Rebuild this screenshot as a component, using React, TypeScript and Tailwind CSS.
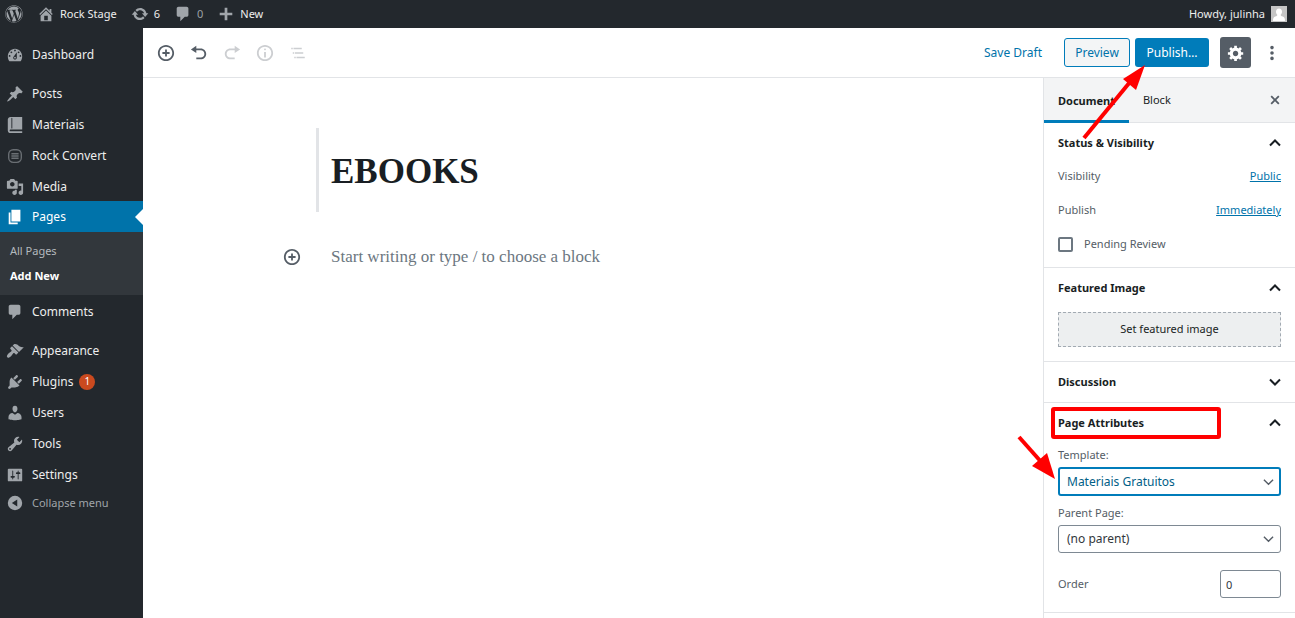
import { useState } from 'react';
import type { ReactNode } from 'react';
import { FaWordpress } from 'react-icons/fa';
import { clsx } from 'clsx';

const icons = {
  home: 'M16 8.5l1.53 1.53-1.06 1.06L10 4.6l-6.47 6.49-1.06-1.06L10 2.5l4 4v-2h2v4zm-6-2.46l6 5.99V18H4v-5.97zM12 17v-5H8v5h4z',
  update: 'M10.2 3.28c3.53 0 6.43 2.61 6.92 6h2.08l-3.5 4-3.5-4h2.32c-.45-1.97-2.21-3.45-4.32-3.45-1.45 0-2.73.71-3.54 1.78L4.95 5.66C6.23 4.2 8.11 3.28 10.2 3.28zm-.4 13.44c-3.52 0-6.43-2.61-6.92-6H.8l3.5-4c1.17 1.33 2.33 2.67 3.5 4H5.48c.45 1.97 2.21 3.45 4.32 3.45 1.45 0 2.73-.71 3.54-1.78l1.71 1.95c-1.28 1.46-3.15 2.38-5.25 2.38z',
  comments: 'M5 2h9c1.1 0 2 .9 2 2v7c0 1.1-.9 2-2 2h-2l-5 5v-5H5c-1.1 0-2-.9-2-2V4c0-1.1.9-2 2-2z',
  plus: 'M17 8.500v3h-5.5V17h-3v-5.500H3v-3h5.500V3h3v5.500z',
  dashboard: 'M3.76 17h12.48c1.1-1.37 1.76-3.61 1.76-5.500 0-4.420-3.580-8.500-8-8.500s-8 4.080-8 8.500c0 1.890.66 4.130 1.760 5.500zM10 4c.55 0 1 .45 1 1s-.45 1-1 1-1-.45-1-1 .45-1 1-1zM6 6c.55 0 1 .45 1 1s-.45 1-1 1-1-.45-1-1 .45-1 1-1zm8 0c.55 0 1 .45 1 1s-.45 1-1 1-1-.45-1-1 .45-1 1-1zm-5.370 5.550L12 7v6c0 1.100-.9 2-2 2s-2-.9-2-2c0-.57.24-1.080.63-1.450zM4 10c.55 0 1 .45 1 1s-.45 1-1 1-1-.45-1-1 .45-1 1-1zm12 0c.55 0 1 .45 1 1s-.45 1-1 1-1-.45-1-1 .45-1 1-1zm-5 3c0-.55-.45-1-1-1s-1 .45-1 1 .45 1 1 1 1-.45 1-1z',
  post: 'M10.44 3.02l1.82-1.82 6.36 6.35-1.83 1.82c-1.05-.68-2.48-.57-3.41.36l-.75.75c-.92.93-1.04 2.35-.35 3.41l-1.83 1.82-2.41-2.41-2.8 2.79c-.42.42-3.38 2.71-3.8 2.29s1.86-3.39 2.28-3.81l2.79-2.79L4.1 9.36l1.83-1.82c1.05.69 2.48.57 3.4-.36l.75-.75c.93-.92 1.05-2.35.36-3.41z',
  book: 'M5 17h13v2H5c-1.66 0-3-1.34-3-3V4c0-1.66 1.34-3 3-3h13v14H5c-.55 0-1 .45-1 1s.45 1 1 1zm2-3.5v-11c0-.28-.22-.5-.5-.5s-.5.22-.5.5v11c0 .28.22.5.5.5s.5-.22.5-.5z',
  media: 'M13 11V4c0-.55-.45-1-1-1h-1.67L9 1H5L3.67 3H2c-.55 0-1 .45-1 1v7c0 .55.45 1 1 1h10c.55 0 1-.45 1-1zM7 4.5c1.38 0 2.5 1.12 2.5 2.5S8.38 9.5 7 9.5 4.5 8.38 4.5 7 5.62 4.5 7 4.5zM14 6h5v10.5c0 1.38-1.12 2.5-2.5 2.5S14 17.88 14 16.5s1.12-2.5 2.5-2.5c.17 0 .34.02.5.05V9h-3V6zm-4 8.05V13h2v3.5c0 1.38-1.12 2.5-2.5 2.5S7 17.88 7 16.5 8.12 14 9.5 14c.17 0 .34.02.5.05z',
  page: 'M6 15V2h10v13H6zm-1 1h8v2H3V5h2v11z',
  appearance: 'M14.48 11.06L7.41 3.99l1.5-1.5c.5-.56 2.3-.47 3.51.32 1.21.8 1.43 1.28 2.91 2.1 1.18.64 2.45 1.26 4.45.85zm-.71.71L6.7 4.7 4.93 6.47c-.39.39-.39 1.02 0 1.41l1.06 1.06c.39.39.39 1.03 0 1.42-.6.6-1.43 1.11-2.21 1.69-.35.26-.7.53-1.01.84C1.43 14.23.4 16.08 1.4 17.07c.99 1 2.84-.03 4.18-1.36.31-.31.58-.66.85-1.02.57-.78 1.08-1.61 1.69-2.21.39-.39 1.02-.39 1.41 0l1.06 1.06c.39.39 1.02.39 1.41 0z',
  plugins: 'M13.11 4.36L9.87 7.6 8 5.73l3.24-3.24c.35-.34 1.05-.2 1.56.32.52.51.66 1.21.31 1.55zm-8 1.77l.91-1.12 9.01 9.01-1.19.84c-.71.71-2.63 1.16-3.82 1.16H6.14L4.9 17.26c-.59.59-1.54.59-2.12 0-.59-.58-.59-1.53 0-2.12l1.24-1.24v-3.88c0-1.13.4-3.19 1.09-3.89zm7.26 3.97l3.24-3.24c.34-.35 1.04-.21 1.55.31.52.51.66 1.21.31 1.55l-3.24 3.25z',
  users: 'M10 9.25c-2.27 0-2.73-3.44-2.73-3.44C7 4.02 7.82 2 9.97 2c2.16 0 2.98 2.02 2.71 3.81 0 0-.41 3.44-2.68 3.44zm0 2.57L12.72 10c2.39 0 4.52 2.33 4.52 4.53v2.49s-3.65 1.13-7.24 1.13c-3.65 0-7.24-1.13-7.24-1.13v-2.49c0-2.25 1.94-4.48 4.47-4.48z',
  tools: 'M16.68 9.77c-1.34 1.34-3.3 1.67-4.95.99l-5.41 6.52c-.99.99-2.59.99-3.58 0s-.99-2.59 0-3.57l6.52-5.42c-.68-1.65-.35-3.61.99-4.95 1.28-1.28 3.12-1.62 4.72-1.06l-2.89 2.89 2.82 2.82 2.86-2.87c.53 1.58.18 3.39-1.08 4.65zM3.81 16.21c.4.39 1.04.39 1.43 0 .4-.4.4-1.04 0-1.43-.39-.4-1.03-.4-1.43 0-.39.39-.39 1.03 0 1.43z',
  settings: 'M18 16V4c0-.55-.45-1-1-1H3c-.55 0-1 .45-1 1v12c0 .55.45 1 1 1h14c.55 0 1-.45 1-1zM8 11h1c.55 0 1 .45 1 1s-.45 1-1 1H8v1.5c0 .28-.22.5-.5.5s-.5-.22-.5-.5V13H6c-.55 0-1-.45-1-1s.45-1 1-1h1V5.5c0-.28.22-.5.5-.5s.5.22.5.5V11zm5-2h-1c-.55 0-1-.45-1-1s.45-1 1-1h1V5.5c0-.28.22-.5.5-.5s.5.22.5.5V7h1c.55 0 1 .45 1 1s-.45 1-1 1h-1v5.5c0 .28-.22.5-.5.5s-.5-.22-.5-.5V9z',
  collapse: 'M10 2a8 8 0 1 0 0 16 8 8 0 0 0 0-16zm2.500 4v8L6.500 10z',
  insert: 'M10 1c-5 0-9 4-9 9s4 9 9 9 9-4 9-9-4-9-9-9zm0 16c-3.9 0-7-3.1-7-7s3.1-7 7-7 7 3.1 7 7-3.1 7-7 7zm1-11H9v3H6v2h3v3h2v-3h3V9h-3V6z',
  undo: 'M12 5H7V2L1 6l6 4V7h5c2.2 0 4 1.8 4 4s-1.8 4-4 4H7v2h5c3.3 0 6-2.7 6-6s-2.7-6-6-6z',
  redo: 'M8 5h5V2l6 4-6 4V7H8c-2.2 0-4 1.8-4 4s1.8 4 4 4h5v2H8c-3.3 0-6-2.7-6-6s2.7-6 6-6z',
  info: 'M9 15h2V9H9v6zm1-10c-.5 0-1 .5-1 1s.5 1 1 1 1-.5 1-1-.5-1-1-1zm0-4c-5 0-9 4-9 9s4 9 9 9 9-4 9-9-4-9-9-9zm0 16c-3.9 0-7-3.1-7-7s3.1-7 7-7 7 3.1 7 7-3.1 7-7 7z',
  outline: 'M5 5H3v2h2V5zm3 8h11v-2H8v2zm9-8H6v2h11V5zM7 11H5v2h2v-2zm0 8h2v-2H7v2zm3-2v2h11v-2H10z',
  gear: 'M18 12h-2.18c-.17.7-.44 1.35-.81 1.93l1.54 1.54-2.1 2.1-1.54-1.54c-.58.36-1.23.63-1.91.79V19H8v-2.18c-.68-.16-1.33-.43-1.91-.79l-1.54 1.54-2.12-2.12 1.54-1.54c-.36-.58-.63-1.23-.79-1.91H1V9.03h2.17c.16-.7.44-1.35.8-1.94L2.43 5.55l2.1-2.1 1.54 1.54c.58-.37 1.24-.64 1.93-.81V2h3v2.18c.68.16 1.33.43 1.91.79l1.54-1.54 2.12 2.12-1.54 1.54c.36.59.64 1.24.8 1.94H18V12zm-8.5 1.5c1.66 0 3-1.34 3-3s-1.34-3-3-3-3 1.34-3 3 1.34 3 3 3z',
  close: 'M14.95 6.46L11.41 10l3.54 3.54-1.41 1.41L10 11.42l-3.53 3.53-1.42-1.42L8.58 10 5.05 6.47l1.42-1.42L10 8.58l3.54-3.53z',
  more: 'M10 2a2 2 0 1 1 0 4 2 2 0 0 1 0-4zm0 6a2 2 0 1 1 0 4 2 2 0 0 1 0-4zm0 6a2 2 0 1 1 0 4 2 2 0 0 1 0-4z',
};

type IconName = keyof typeof icons;

function Icon({ name, className = 'size-[18px]' }: { name: IconName; className?: string }) {
  return (
    <svg viewBox={name === 'outline' ? '0 0 24 24' : '0 0 20 20'} fill="currentColor" fillRule="evenodd" aria-hidden="true" className={clsx('shrink-0', className)}>
      <path d={icons[name]} />
    </svg>
  );
}

function RockConvertIcon() {
  return (
    <svg viewBox="0 0 20 20" fill="none" stroke="currentColor" strokeWidth="1.5" aria-hidden="true" className="size-[18px] shrink-0 text-[#6a6f74]">
      <rect x="3" y="3" width="14" height="14" rx="5" />
      <path d="M6 7.500h8M6 10h8M6 12.500h8" />
    </svg>
  );
}

function Chevron({ open, className, weight = 2 }: { open: boolean; className?: string; weight?: number }) {
  return (
    <svg viewBox="0 0 12 8" fill="none" stroke="currentColor" strokeWidth={weight} aria-hidden="true" className={clsx('shrink-0', className ?? 'h-2 w-3')}>
      <path d={open ? 'M1 6.500 6 1.500l5 5' : 'M1 1.500l5 5 5-5'} />
    </svg>
  );
}

interface MenuItem {
  label: string;
  icon?: IconName;
  badge?: number;
}

const contentMenu: MenuItem[] = [
  { label: 'Posts', icon: 'post' },
  { label: 'Materiais', icon: 'book' },
  { label: 'Rock Convert' },
  { label: 'Media', icon: 'media' },
];

const adminMenu: MenuItem[] = [
  { label: 'Appearance', icon: 'appearance' },
  { label: 'Plugins', icon: 'plugins', badge: 1 },
  { label: 'Users', icon: 'users' },
  { label: 'Tools', icon: 'tools' },
  { label: 'Settings', icon: 'settings' },
];

function MenuLink({ item }: { item: MenuItem }) {
  return (
    <a href="#" className="flex h-[31px] items-center gap-2 pt-0.5 pl-[6px] text-[#eee]">
      <span className="text-[#a0a5aa]">{item.icon ? <Icon name={item.icon} /> : <RockConvertIcon />}</span>
      {item.label}
      {item.badge && <span className="-ml-0.5 flex size-4 items-center justify-center rounded-full bg-[#ca4a1f] text-[10px] text-white">{item.badge}</span>}
    </a>
  );
}

function AdminBar() {
  return (
    <header className="flex h-7 shrink-0 items-center bg-[#23282d] pr-2 pl-[5px] text-[11px] text-[#eee]">
      <a href="#" aria-label="WordPress" className="mr-[14px] text-[#a0a5aa]"><FaWordpress className="size-[18px]" /></a>
      <a href="#" className="mr-[14px] flex items-center gap-[5px]"><Icon name="home" className="size-[18px] text-[#a0a5aa]" />Rock Stage</a>
      <a href="#" className="mr-[14px] flex items-center gap-[5px]"><Icon name="update" className="size-[18px] text-[#a0a5aa]" />6</a>
      <a href="#" className="mr-[14px] flex items-center gap-[5px] text-[#9ca1a6]"><Icon name="comments" className="size-[18px] text-[#a0a5aa]" />0</a>
      <a href="#" className="flex items-center gap-[5px]"><Icon name="plus" className="size-[18px] text-[#a0a5aa]" />New</a>
      <a href="#" className="ml-auto flex items-center gap-[6px]">
        Howdy, julinha
        <svg viewBox="0 0 16 16" aria-hidden="true" className="size-4">
          <rect width="16" height="16" fill="#c5c5c5" />
          <path fill="#fff" d="M8 2.500c2 0 3 1.400 3 3.200 0 1.300-.6 2.500-1.300 3.100 0 1 .5 1.300 2 1.800 1.800.6 2.300 1.700 2.300 4.400H2c0-2.700.5-3.800 2.300-4.400 1.500-.5 2-.8 2-1.800C5.600 8.200 5 7 5 5.700c0-1.800 1-3.200 3-3.200z" />
        </svg>
      </a>
    </header>
  );
}

function AdminMenu() {
  return (
    <nav className="w-[143px] shrink-0 bg-[#23282d] pt-[10px] text-xs">
      <MenuLink item={{ label: 'Dashboard', icon: 'dashboard' }} />
      <div className="mt-2">
        {contentMenu.map(item => <MenuLink key={item.label} item={item} />)}
      </div>
      <a href="#" aria-current="page" className="relative flex h-[31px] items-center gap-2 bg-[#0073aa] pl-[6px] text-white">
        <Icon name="page" />
        Pages
        <span className="absolute right-0 border-y-8 border-r-8 border-y-transparent border-r-white" />
      </a>
      <div className="bg-[#32373c] pt-[7px] pb-[6px] pl-[10px] text-[11px]">
        <a href="#" className="flex h-[25px] items-center text-[#b4b9be]">All Pages</a>
        <a href="#" className="flex h-[25px] items-center font-bold text-white">Add New</a>
      </div>
      <MenuLink item={{ label: 'Comments', icon: 'comments' }} />
      <div className="mt-2">
        {adminMenu.map(item => <MenuLink key={item.label} item={item} />)}
      </div>
      <button className="flex h-7 items-center gap-2 pl-[6px] text-[11px] text-[#a0a5aa]">
        <Icon name="collapse" />
        Collapse menu
      </button>
    </nav>
  );
}

function Toolbar() {
  return (
    <div className="flex h-[50px] shrink-0 items-center border-b border-[#e2e4e7] px-[14px] text-xs text-[#555d66]">
      <div className="flex items-center gap-[15px]">
        <button aria-label="Add block"><Icon name="insert" /></button>
        <button aria-label="Undo"><Icon name="undo" /></button>
        <button aria-label="Redo" disabled className="text-[#ccced1]"><Icon name="redo" /></button>
        <button aria-label="Content structure" disabled className="text-[#ccced1]"><Icon name="info" /></button>
        <button aria-label="Block navigation" disabled className="text-[#ccced1]"><Icon name="outline" /></button>
      </div>
      <div className="ml-auto flex items-center">
        <button className="mr-[22px] text-[#0073aa]">Save Draft</button>
        <button className="mr-[5px] h-[29px] w-[66px] rounded-[3px] border border-[#007cba] bg-[#f3f5f6] text-[#0073aa]">Preview</button>
        <button className="mr-[11px] h-[29px] w-[74px] rounded-[3px] bg-[#007cba] text-white">Publish…</button>
        <button aria-label="Settings" className="mr-3 flex size-[31px] items-center justify-center rounded-[3px] bg-[#555d66] text-white"><Icon name="gear" /></button>
        <button aria-label="More tools"><Icon name="more" /></button>
      </div>
    </div>
  );
}

function Canvas() {
  return (
    <main className="flex-1 pt-[50px] font-['Liberation_Serif',serif]">
      <div className="mx-auto w-full max-w-[554px]">
        <div className="flex h-[84px] items-center border-l-3 border-[#e2e4e7] pt-1 pl-3">
          <h1 className="text-[35px] font-bold text-[#191e23]">EBOOKS</h1>
        </div>
        <div className="-ml-[33px] mt-8 flex items-center gap-[30px] text-[17px] text-[#6c7781]">
          <button aria-label="Add block" className="text-[#555d66]"><Icon name="insert" /></button>
          <p>Start writing or type / to choose a block</p>
        </div>
      </div>
    </main>
  );
}

function Panel({ title, defaultOpen = true, marked = false, children }: { title: string; defaultOpen?: boolean; marked?: boolean; children?: ReactNode }) {
  const [open, setOpen] = useState(defaultOpen);
  return (
    <section className="border-b border-[#e2e4e7]">
      <h2 className="relative">
        <button onClick={() => setOpen(!open)} aria-expanded={open} className="flex h-10 w-full items-center justify-between px-[14px] font-bold text-[#191e23]">
          {title}
          <Chevron open={open} />
        </button>
        {marked && <span className="pointer-events-none absolute top-1 left-[7px] h-8 w-[170px] rounded-[3px] border-4 border-[#f00]" />}
      </h2>
      {open && children}
    </section>
  );
}

function Sidebar() {
  const [template, setTemplate] = useState('Materiais Gratuitos');
  const [order, setOrder] = useState('0');
  return (
    <aside className="relative w-[252px] shrink-0 border-l border-[#e2e4e7] text-[11px] text-[#555d66]">
      <div className="flex h-[45px] border-b border-[#e2e4e7] bg-[#f3f4f5] text-[#191e23]">
        <button className="-mb-px border-b-3 border-[#007cba] px-[14px] pt-1 font-bold">Document</button>
        <button className="px-[14px] pt-px">Block</button>
        <button aria-label="Close settings" className="mr-[11px] ml-auto text-[#555d66]"><Icon name="close" /></button>
      </div>

      <Panel title="Status & Visibility">
        <div className="flex flex-col gap-[14px] px-[14px] pt-[3px] pb-[13px]">
          <div className="flex h-5 items-center justify-between">Visibility<a href="#" className="text-[#0073aa] underline">Public</a></div>
          <div className="flex h-5 items-center justify-between">Publish<a href="#" className="text-[#0073aa] underline">Immediately</a></div>
          <label className="flex h-5 items-center gap-[11px]">
            <input type="checkbox" className="size-[15px] appearance-none rounded-xs border-2 border-[#6c7781] bg-white checked:bg-[#11a0d2]" />
            Pending Review
          </label>
        </div>
      </Panel>

      <Panel title="Featured Image">
        <div className="px-[14px] pt-1 pb-[14px]">
          <button className="h-[35px] w-full border border-dashed border-[#a2aab2] bg-[#edeff0] text-[#191e23]">Set featured image</button>
        </div>
      </Panel>

      <Panel title="Discussion" defaultOpen={false} />

      <Panel title="Page Attributes" marked>
        <div className="px-[14px] pt-[3px] pb-[14px]">
          <label htmlFor="template" className="flex h-[18px] items-center">Template:</label>
          <div className="relative mt-[3px]">
            <select id="template" value={template} onChange={e => setTemplate(e.target.value)} className="h-[29px] w-full appearance-none rounded-[3px] border-2 border-[#007cba] bg-white px-[7px] text-xs text-[#016087] outline-none">
              <option>Materiais Gratuitos</option>
              <option>Default template</option>
            </select>
            <Chevron open={false} weight={1.5} className="pointer-events-none absolute top-[11px] right-[7px] h-2 w-[11px]" />
          </div>
          <label htmlFor="parent" className="mt-2 flex h-[18px] items-center">Parent Page:</label>
          <div className="relative mt-[3px]">
            <select id="parent" className="h-7 w-full appearance-none rounded-[3px] border border-[#7e8993] bg-white px-2 text-xs text-[#32373c]">
              <option>(no parent)</option>
            </select>
            <Chevron open={false} weight={1.5} className="pointer-events-none absolute top-[10px] right-[7px] h-2 w-[11px]" />
          </div>
          <div className="mt-[17px] flex items-center justify-between">
            <label htmlFor="order">Order</label>
            <input id="order" value={order} onChange={e => setOrder(e.target.value)} className="h-7 w-[61px] rounded-[3px] border border-[#7e8993] bg-white px-[5px] text-[#32373c]" />
          </div>
        </div>
      </Panel>

      {/* red arrows: Publish button and template field */}
      <svg viewBox="0 0 72 80" aria-hidden="true" className="pointer-events-none absolute -top-4 left-[34px] h-20 w-[72px]">
        <path d="M6 76 52 20" stroke="#f00" strokeWidth="4" />
        <path d="M67 3 45 17l13 11z" fill="#f00" />
      </svg>
      <svg viewBox="0 0 44 48" aria-hidden="true" className="pointer-events-none absolute top-[356px] -left-7 h-12 w-11">
        <path d="M3 3l24 27" stroke="#f00" strokeWidth="4" />
        <path d="M39 45 16 32l15-13z" fill="#f00" />
      </svg>
    </aside>
  );
}

export default function App() {
  return (
    <div className="flex min-h-screen flex-col bg-white font-['Noto_Sans',sans-serif]">
      <AdminBar />
      <div className="flex flex-1">
        <AdminMenu />
        <div className="flex min-w-0 flex-1 flex-col">
          <Toolbar />
          <div className="flex flex-1">
            <Canvas />
            <Sidebar />
          </div>
        </div>
      </div>
    </div>
  );
}
